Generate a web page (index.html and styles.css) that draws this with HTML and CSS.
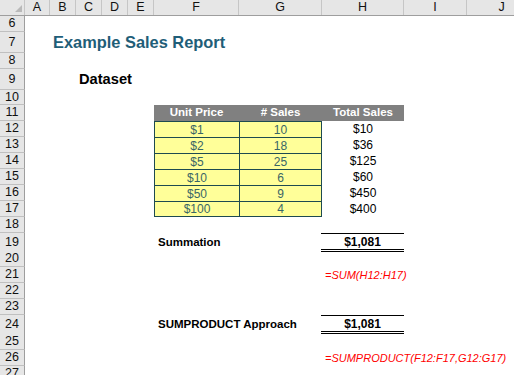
FILE: index.html
```html
<!DOCTYPE html>
<html>
<head>
<meta charset="utf-8">
<link rel="stylesheet" href="styles.css">
</head>
<body>
<div class="sheet">
  <div class="row hdr">
    <div class="corner"><span class="tri"></span></div>
    <div class="ch">A</div>
    <div class="ch">B</div>
    <div class="ch">C</div>
    <div class="ch">D</div>
    <div class="ch">E</div>
    <div class="ch">F</div>
    <div class="ch">G</div>
    <div class="ch">H</div>
    <div class="ch">I</div>
    <div class="ch">J</div>
  </div>

  <div class="row h16"><div class="rh">6</div></div>
  <div class="row h21"><div class="rh">7</div><div class="cell cB title">Example Sales Report</div></div>
  <div class="row h16"><div class="rh">8</div></div>
  <div class="row h21"><div class="rh">9</div><div class="cell cC subtitle">Dataset</div></div>
  <div class="row h15"><div class="rh">10</div></div>
  <div class="row h16">
    <div class="rh">11</div>
    <div class="cell cF th">Unit Price</div>
    <div class="cell cG th"># Sales</div>
    <div class="cell cH th">Total Sales</div>
  </div>
  <div class="row h16">
    <div class="rh">12</div>
    <div class="cell cF yc">$1</div>
    <div class="cell cG yc yr">10</div>
    <div class="cell cH val">$10</div>
  </div>
  <div class="row h16">
    <div class="rh">13</div>
    <div class="cell cF yc">$2</div>
    <div class="cell cG yc yr">18</div>
    <div class="cell cH val">$36</div>
  </div>
  <div class="row h16">
    <div class="rh">14</div>
    <div class="cell cF yc">$5</div>
    <div class="cell cG yc yr">25</div>
    <div class="cell cH val">$125</div>
  </div>
  <div class="row h16">
    <div class="rh">15</div>
    <div class="cell cF yc">$10</div>
    <div class="cell cG yc yr">6</div>
    <div class="cell cH val">$60</div>
  </div>
  <div class="row h16">
    <div class="rh">16</div>
    <div class="cell cF yc">$50</div>
    <div class="cell cG yc yr">9</div>
    <div class="cell cH val">$450</div>
  </div>
  <div class="row h16">
    <div class="rh">17</div>
    <div class="cell cF yc yb">$100</div>
    <div class="cell cG yc yr yb">4</div>
    <div class="cell cH val">$400</div>
  </div>
  <div class="row h16"><div class="rh">18</div></div>
  <div class="row h17">
    <div class="rh">19</div>
    <div class="cell cF label">Summation</div>
    <div class="cell cH total">$1,081</div>
  </div>
  <div class="row h17"><div class="rh">20</div></div>
  <div class="row h16">
    <div class="rh">21</div>
    <div class="cell cH formula">=SUM(H12:H17)</div>
  </div>
  <div class="row h16"><div class="rh">22</div></div>
  <div class="row h16"><div class="rh">23</div></div>
  <div class="row h18">
    <div class="rh">24</div>
    <div class="cell cF label">SUMPRODUCT Approach</div>
    <div class="cell cH total">$1,081</div>
  </div>
  <div class="row h17"><div class="rh">25</div></div>
  <div class="row h16">
    <div class="rh">26</div>
    <div class="cell cH formula">=SUMPRODUCT(F12:F17,G12:G17)</div>
  </div>
  <div class="row h16"><div class="rh">27</div></div>
</div>
</body>
</html>
```

FILE: styles.css
```css
html, body {
  margin: 0;
  padding: 0;
  background: #ffffff;
}

body {
  font-family: "Liberation Sans", Arial, sans-serif;
  color: #000;
}

.sheet {
  width: 514px;
  height: 375px;
  overflow: hidden;
}

.row {
  display: grid;
  grid-template-columns: 25px 25px 26px 26px 26px 26px 85px 83px 82px 63px 70px;
  box-sizing: border-box;
}

.h15 { height: 15px; }
.h16 { height: 16px; }
.h17 { height: 17px; }
.h18 { height: 18px; }
.h21 { height: 21px; }

/* column header */
.hdr {
  height: 16px;
  background: #e6e6e6;
  border-bottom: 1px solid #9e9e9e;
}

.corner {
  display: flex;
  justify-content: flex-end;
  align-items: flex-end;
  padding: 0 2px 3px 0;
  border-right: 1px solid #c6c6c6;
}

.tri {
  width: 0;
  height: 0;
  border-left: 7px solid transparent;
  border-bottom: 7px solid #b9b9b9;
}

.ch {
  display: flex;
  align-items: center;
  justify-content: center;
  font-size: 12.5px;
  color: #111;
  border-right: 1px solid #c6c6c6;
  line-height: 1;
}

/* row header */
.rh {
  grid-column: 1;
  display: flex;
  align-items: center;
  justify-content: center;
  background: #e6e6e6;
  border-right: 1px solid #9e9e9e;
  border-bottom: 1px solid #c0c0c0;
  font-size: 12.5px;
  color: #111;
  line-height: 1;
  box-sizing: border-box;
}

/* cells */
.cell {
  display: flex;
  align-items: center;
  white-space: nowrap;
  box-sizing: border-box;
  font-size: 12px;
  line-height: 1;
  min-width: 0;
}

.cB { grid-column: 3; }
.cC { grid-column: 4; }
.cF { grid-column: 7; }
.cG { grid-column: 8; }
.cH { grid-column: 9; }

.title {
  padding-left: 3px;
  font-size: 16.4px;
  font-weight: bold;
  color: #1f5e78;
}

.subtitle {
  padding-left: 3px;
  font-size: 14.67px;
  font-weight: bold;
}

.th {
  justify-content: center;
  background: #808080;
  color: #ffffff;
  font-weight: bold;
  font-size: 11.5px;
}

.yc {
  justify-content: center;
  background: #ffff99;
  color: #3a6666;
  border-top: 1px solid #1e4b50;
  border-left: 1px solid #1e4b50;
}

.yr { border-right: 1px solid #1e4b50; }
.yb { border-bottom: 1px solid #1e4b50; }

.val {
  justify-content: center;
}

.label {
  padding-left: 4px;
  font-weight: bold;
  font-size: 11.5px;
}

.total {
  justify-content: center;
  align-self: start;
  height: 19px;
  margin-left: -1px;
  font-weight: bold;
  font-size: 12px;
  border-top: 1px solid #000;
  border-bottom: 3px double #000;
}

.formula {
  padding-left: 3px;
  font-style: italic;
  font-size: 11px;
  color: #ff0000;
}
```
